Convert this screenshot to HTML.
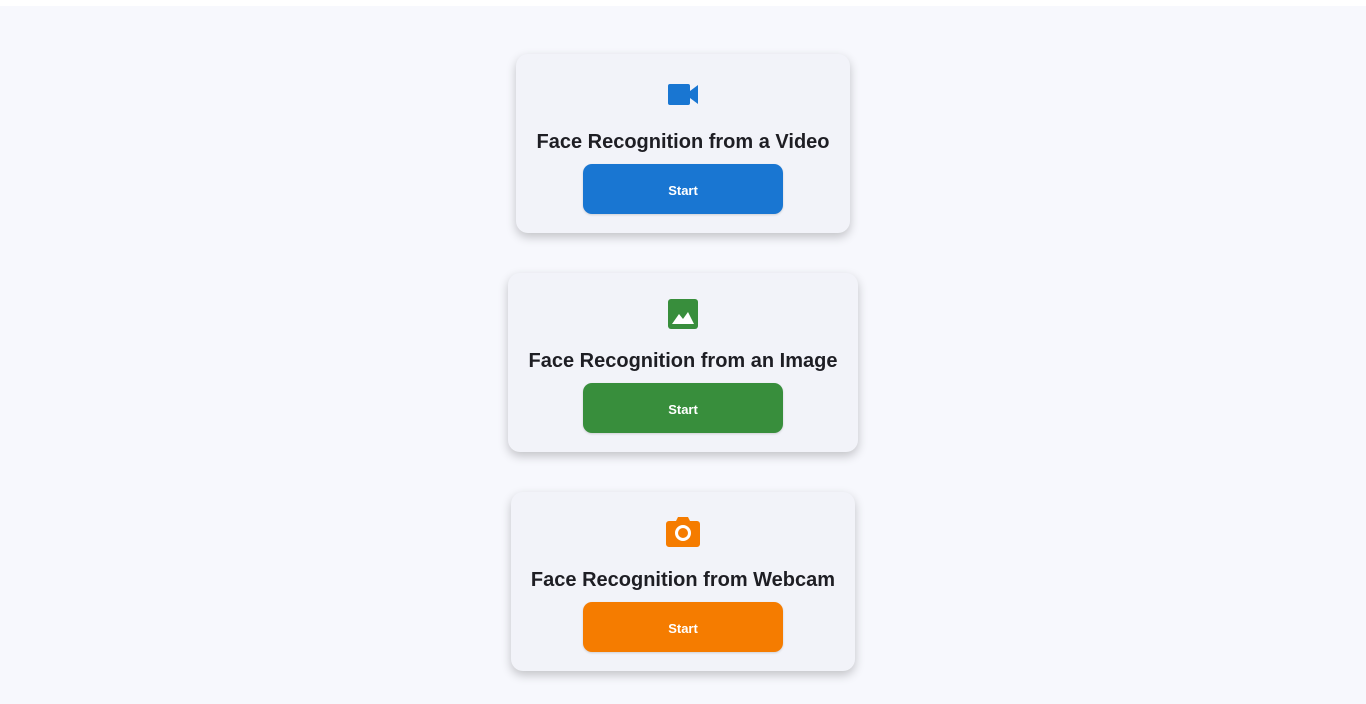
<!DOCTYPE html>
<html><head><meta charset="utf-8"><style>
html,body{margin:0;padding:0}
body{width:1366px;height:704px;background:#f7f8fd;font-family:"Liberation Sans",sans-serif;position:relative;overflow:hidden}
.top{position:absolute;left:0;top:0;width:1366px;height:6px;background:#fff}
.card{position:absolute;height:179px;background:#f2f3f9;border-radius:12px;box-shadow:0 4px 10px rgba(0,0,0,0.22);}
.icon{position:absolute;left:50%;transform:translateX(-50%)}
.title{position:absolute;left:0;right:0;text-align:center;font-weight:bold;font-size:20px;color:#1e1e24;top:76px;line-height:24px;white-space:nowrap}
.btn{position:absolute;left:50%;margin-left:-100px;width:200px;height:50px;border-radius:9px;top:110px;color:#fff;font-weight:bold;font-size:13px;text-align:center;line-height:53px;box-shadow:0 1px 2px rgba(0,0,0,0.15)}
</style></head><body>
<div class="top"></div>

<div class="card" style="left:516px;top:54px;width:334px">
  <svg class="icon" style="top:30px" width="30" height="21" viewBox="0 0 30 21"><rect x="0" y="0" width="22" height="21" rx="2" fill="#1976d2"/><path d="M22 7 L30 1 V20 L22 14 Z" fill="#1976d2"/></svg>
  <div class="title" style="top:76px">Face Recognition from a Video</div>
  <div class="btn" style="background:#1976d2">Start</div>
</div>

<div class="card" style="left:508px;top:273px;width:350px">
  <svg class="icon" style="top:26px" width="30" height="30" viewBox="0 0 30 30"><rect width="30" height="30" rx="3" fill="#388e3c"/><path d="M4 25 L11 15 L15 20 L20 13 L26 25 Z" fill="#fff"/></svg>
  <div class="title">Face Recognition from an Image</div>
  <div class="btn" style="background:#388e3c">Start</div>
</div>

<div class="card" style="left:511px;top:492px;width:344px">
  <svg class="icon" style="top:24px" width="34" height="31" viewBox="0 0 34 31"><path d="M3 5 H10 L12 1 H22 L24 5 H31 A3 3 0 0 1 34 8 V28 A3 3 0 0 1 31 31 H3 A3 3 0 0 1 0 28 V8 A3 3 0 0 1 3 5 Z" fill="#f57c00"/><circle cx="17" cy="17" r="6.5" fill="none" stroke="#fff" stroke-width="3"/></svg>
  <div class="title">Face Recognition from Webcam</div>
  <div class="btn" style="background:#f57c00">Start</div>
</div>
</body></html>
